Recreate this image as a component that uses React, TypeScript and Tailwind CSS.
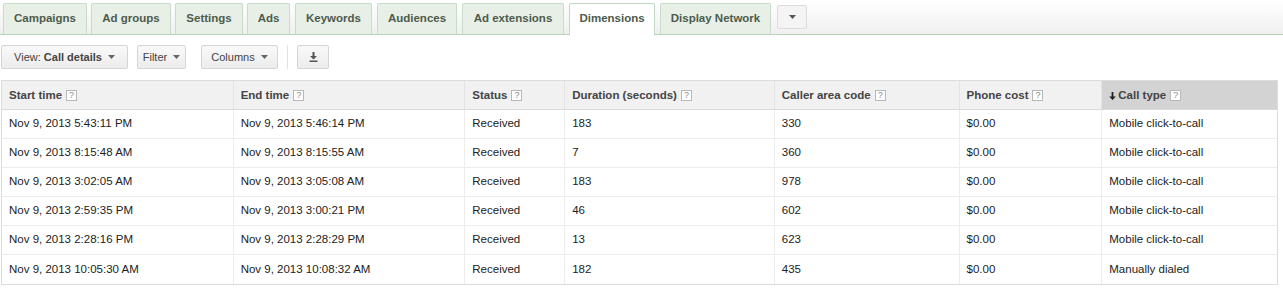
import React from "react";

const tabs = [
  { label: "Campaigns", w: 84, ml: 0 },
  { label: "Ad groups", w: 80, ml: 4 },
  { label: "Settings", w: 68, ml: 4 },
  { label: "Ads", w: 43, ml: 4 },
  { label: "Keywords", w: 77, ml: 5 },
  { label: "Audiences", w: 80, ml: 5 },
  { label: "Ad extensions", w: 102, ml: 5 },
  { label: "Dimensions", w: 86, ml: 5, active: true },
  { label: "Display Network", w: 111, ml: 5 },
];

const cols = [
  { label: "Start time", w: 231 },
  { label: "End time", w: 232 },
  { label: "Status", w: 100 },
  { label: "Duration (seconds)", w: 210 },
  { label: "Caller area code", w: 185 },
  { label: "Phone cost", w: 143 },
  { label: "Call type", w: 176, sorted: true },
];

const rows = [
  ["Nov 9, 2013 5:43:11 PM", "Nov 9, 2013 5:46:14 PM", "Received", "183", "330", "$0.00", "Mobile click-to-call"],
  ["Nov 9, 2013 8:15:48 AM", "Nov 9, 2013 8:15:55 AM", "Received", "7", "360", "$0.00", "Mobile click-to-call"],
  ["Nov 9, 2013 3:02:05 AM", "Nov 9, 2013 3:05:08 AM", "Received", "183", "978", "$0.00", "Mobile click-to-call"],
  ["Nov 9, 2013 2:59:35 PM", "Nov 9, 2013 3:00:21 PM", "Received", "46", "602", "$0.00", "Mobile click-to-call"],
  ["Nov 9, 2013 2:28:16 PM", "Nov 9, 2013 2:28:29 PM", "Received", "13", "623", "$0.00", "Mobile click-to-call"],
  ["Nov 9, 2013 10:05:30 AM", "Nov 9, 2013 10:08:32 AM", "Received", "182", "435", "$0.00", "Manually dialed"],
];

function Caret() {
  return (
    <svg width="7" height="4" viewBox="0 0 7 4" className="ml-[6px] inline-block">
      <path d="M0 0 L7 0 L3.5 4 Z" fill="#666" />
    </svg>
  );
}

function Help() {
  return (
    <span className="ml-[4px] inline-flex h-[11px] w-[11px] items-center justify-center border border-[#b8b8b8] bg-white text-[9px] font-normal leading-none text-[#888]">
      ?
    </span>
  );
}

function Button({ w, ml, children }: { w: number; ml: number; children: React.ReactNode }) {
  return (
    <div
      className="flex h-[24px] items-center justify-center rounded-[2px] border border-[#d5d5d5] bg-gradient-to-b from-[#f9f9f9] to-[#ececec] text-[11px] text-[#444]"
      style={{ width: w, marginLeft: ml }}
    >
      {children}
    </div>
  );
}

export default function App() {
  return (
    <div
      className="h-[289px] w-[1283px] overflow-hidden bg-white"
      style={{ fontFamily: '"Liberation Sans", Arial, sans-serif' }}
    >
      {/* Tab bar */}
      <div className="flex h-[35px] items-end border-b border-[#b9d3b9] bg-gradient-to-b from-white to-[#f0f0f0] pl-[3px]">
        {tabs.map((t) => (
          <div
            key={t.label}
            className={
              t.active
                ? "-mb-px flex h-[32px] items-center justify-center rounded-t-[2px] border border-b-0 border-[#c2d8c2] bg-white pb-[2px] text-[11.5px] font-bold text-[#4d5b4d]"
                : "flex h-[31px] items-center justify-center rounded-t-[2px] border border-b-0 border-[#c9dcc9] bg-[#e7efe7] pb-[1px] text-[11.5px] font-bold text-[#4d5b4d]"
            }
            style={{ width: t.w, marginLeft: t.ml }}
          >
            {t.label}
          </div>
        ))}
        <div className="mb-[5px] ml-[6px] flex h-[24px] w-[30px] items-center justify-center rounded-[2px] border border-[#dcdcdc] bg-[#f4f4f4]">
          <svg width="7" height="4" viewBox="0 0 7 4">
            <path d="M0 0 L7 0 L3.5 4 Z" fill="#555" />
          </svg>
        </div>
      </div>

      {/* Toolbar */}
      <div className="mt-[10px] flex h-[24px] items-center">
        <Button w={127} ml={1}>
          <span>View:&nbsp;</span>
          <span className="font-bold">Call details</span>
          <Caret />
        </Button>
        <Button w={49} ml={9}>
          <span>Filter</span>
          <Caret />
        </Button>
        <Button w={77} ml={15}>
          <span>Columns</span>
          <Caret />
        </Button>
        <div className="ml-[9px] h-[24px] w-px bg-[#e2e2e2]" />
        <Button w={32} ml={9}>
          <svg width="9" height="10" viewBox="0 0 9 10">
            <path d="M3.5 0 H5.5 V4 H8 L4.5 7.5 L1 4 H3.5 Z" fill="#555" />
            <rect x="0.5" y="8.5" width="8" height="1.5" fill="#555" />
          </svg>
        </Button>
      </div>

      {/* Table */}
      <div className="ml-px mt-[11px] w-[1277px] border border-[#dcdcdc]">
        <div className="flex h-[29px] border-b border-[#dadada] bg-[#f1f1f1]">
          {cols.map((c, i) => (
            <div
              key={c.label}
              className={
                "flex items-center pl-[7px] pt-[1px] text-[11.5px] font-bold text-[#444] " +
                (i > 0 ? "border-l border-[#e4e4e4] " : "") +
                (c.sorted ? "bg-[#d3d3d3]" : "")
              }
              style={{ width: c.w }}
            >
              {c.sorted && (
                <svg width="7" height="8" viewBox="0 0 7 8" className="mr-[2px]">
                  <path d="M2.6 0 H4.4 V4.5 H6.8 L3.5 8 L0.2 4.5 H2.6 Z" fill="#222" />
                </svg>
              )}
              <span>{c.label}</span>
              <Help />
            </div>
          ))}
        </div>
        {rows.map((r, ri) => (
          <div
            key={ri}
            className={"flex h-[29px] " + (ri < rows.length - 1 ? "border-b border-[#ececec]" : "")}
          >
            {r.map((cell, ci) => (
              <div
                key={ci}
                className={
                  "flex items-center pl-[7px] text-[11.5px] text-[#222] " +
                  (ci > 0 ? "border-l border-[#ececec]" : "")
                }
                style={{ width: cols[ci].w }}
              >
                {cell}
              </div>
            ))}
          </div>
        ))}
      </div>
    </div>
  );
}
